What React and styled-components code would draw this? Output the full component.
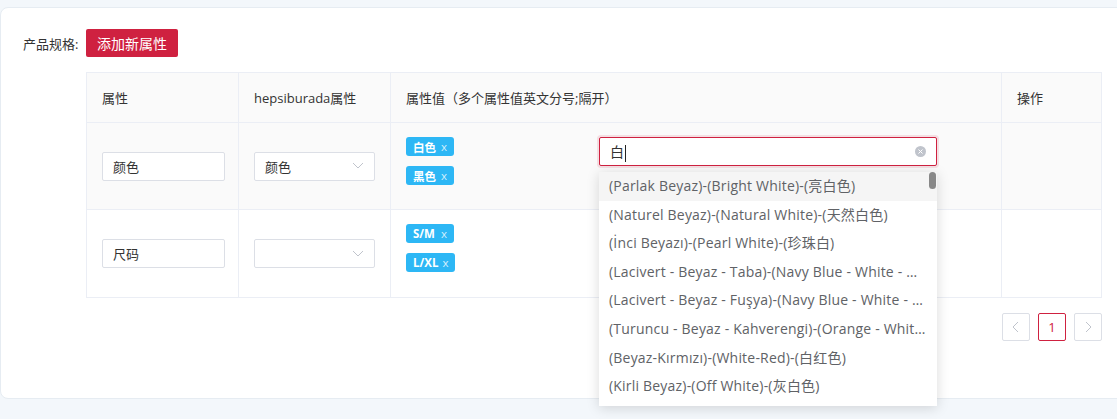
import React from 'react';
import styled, { createGlobalStyle } from 'styled-components';

const GlobalStyle = createGlobalStyle`
    html, body {
        margin: 0;
        padding: 0;
        background: #f3f7fb;
        overflow: hidden;
    }
    body {
        font-family: "Open Sans", "Noto Sans CJK SC", sans-serif;
        color: #333;
    }
`;

const RED = '#cf2140';

const Page = styled.div`
    padding-top: 7px;
    width: 1117px;
    height: 419px;
    box-sizing: border-box;
`;

const Card = styled.div`
    position: relative;
    height: 392px;
    margin-right: -12px;
    box-sizing: border-box;
    padding: 21px 0 0 22px;
    background: #fff;
    border: 1px solid #e6ecf2;
    border-radius: 8px 0 0 8px;
`;

const SpecRow = styled.div`
    display: flex;
    align-items: center;
    gap: 6px;
`;

const Label = styled.span`
    width: 57px;
    font-size: 13px;
    color: #333;
    white-space: nowrap;
`;

const AddButton = styled.button`
    width: 92px;
    height: 28px;
    border: none;
    border-radius: 2px;
    background: ${RED};
    color: #fff;
    font-family: inherit;
    font-size: 14px;
    padding: 0;
    cursor: pointer;
`;

const Body = styled.div`
    margin: 15px 0 0 63px;
    width: 1016px;
`;

const Table = styled.table`
    width: 1015px;
    border-collapse: collapse;
    table-layout: fixed;
`;

const Th = styled.th`
    height: 49px;
    padding: 0 0 0 15px;
    text-align: left;
    font-weight: 400;
    font-size: 13px;
    color: #333;
    background: #fafafa;
    border: 1px solid #ebeef5;
`;

const Tr = styled.tr`
    background: ${p => (p.$hover ? '#fafafa' : '#fff')};
`;

const Td = styled.td`
    height: ${p => p.$h}px;
    padding: 0 0 0 15px;
    border: 1px solid #ebeef5;
    vertical-align: ${p => (p.$top ? 'top' : 'middle')};
    box-sizing: border-box;
`;

const TextInput = styled.input`
    display: block;
    width: 123px;
    height: 29px;
    box-sizing: border-box;
    padding: 0 10px;
    border: 1px solid #dcdfe6;
    border-radius: 2px;
    font-family: inherit;
    font-size: 13px;
    color: #333;
    background: #fff;
    outline: none;
`;

const Select = styled.div`
    width: 121px;
    height: 29px;
    box-sizing: border-box;
    padding: 0 10px;
    display: flex;
    align-items: center;
    justify-content: space-between;
    border: 1px solid #dcdfe6;
    border-radius: 2px;
    background: #fff;
    font-size: 13px;
    color: #333;
`;

const ValueCell = styled.div`
    display: flex;
    align-items: flex-start;
    padding-top: 14px;
`;

const TagList = styled.div`
    width: 193px;
    display: flex;
    flex-direction: column;
    align-items: flex-start;
    gap: 10px;
`;

const Tag = styled.span`
    min-width: 48px;
    height: 19px;
    box-sizing: border-box;
    padding: 0 7px;
    display: inline-flex;
    align-items: center;
    justify-content: space-between;
    gap: 4px;
    border-radius: 3px;
    background: #2db7f5;
    color: #fff;
    font-size: 11.5px;
    font-weight: 700;

    i {
        font-style: normal;
        font-weight: 400;
        color: rgba(255, 255, 255, 0.8);
    }
`;

const SearchBox = styled.div`
    position: relative;
    width: 338px;
`;

const SearchInput = styled.div`
    height: 29px;
    box-sizing: border-box;
    padding: 0 10px;
    display: flex;
    align-items: center;
    justify-content: space-between;
    border: 1px solid ${RED};
    border-radius: 2px;
    box-shadow: 0 0 0 2px rgba(207, 33, 64, 0.12);
    background: #fff;
    font-size: 14px;
    color: #333;
`;

const Caret = styled.span`
    display: inline-block;
    width: 1px;
    height: 17px;
    margin-left: 1px;
    background: #222;
    vertical-align: middle;
`;

const ClearIcon = styled.span`
    width: 11px;
    height: 11px;
    border-radius: 50%;
    background: #c0c4cc;
    display: flex;
    align-items: center;
    justify-content: center;
`;

const Dropdown = styled.ul`
    position: absolute;
    top: 35px;
    left: 0;
    z-index: 10;
    width: 338px;
    height: 234px;
    margin: 0;
    padding: 0;
    list-style: none;
    overflow: hidden;
    background: #fff;
    box-shadow: 0 2px 12px rgba(0, 0, 0, 0.15);
`;

const Option = styled.li`
    height: 28.6px;
    line-height: 28.6px;
    padding: 0 10px;
    white-space: nowrap;
    font-size: 14px;
    letter-spacing: 0.2px;
    color: #606266;
    background: ${p => (p.$active ? '#f5f5f5' : 'transparent')};
`;

const Scrollbar = styled.span`
    position: absolute;
    top: 0;
    right: 1px;
    width: 7px;
    height: 17px;
    border-radius: 4px;
    background: #888;
`;

const Pager = styled.div`
    display: flex;
    justify-content: flex-end;
    gap: 8px;
    margin-top: 15px;
`;

const PageBtn = styled.span`
    width: 28px;
    height: 28px;
    box-sizing: border-box;
    display: flex;
    align-items: center;
    justify-content: center;
    border: 1px solid ${p => (p.$active ? RED : '#dcdfe6')};
    border-radius: 2px;
    color: ${p => (p.$active ? RED : '#c0c4cc')};
    font-size: 13px;
    background: #fff;
`;

const Chevron = ({ dir = 'down' }) => {
    const d = {
        down: 'M1 3l5 5 5-5',
        left: 'M8 1L3 6l5 5',
        right: 'M4 1l5 5-5 5',
    }[dir];
    return (
        <svg width="12" height="12" viewBox="0 0 12 12" fill="none">
            <path d={d} stroke="#c0c4cc" strokeWidth="1" />
        </svg>
    );
};

const options = [
    '(Parlak Beyaz)-(Bright White)-(亮白色)',
    '(Naturel Beyaz)-(Natural White)-(天然白色)',
    '(İnci Beyazı)-(Pearl White)-(珍珠白)',
    '(Lacivert - Beyaz - Taba)-(Navy Blue - White - …',
    '(Lacivert - Beyaz - Fuşya)-(Navy Blue - White - …',
    '(Turuncu - Beyaz - Kahverengi)-(Orange - Whit…',
    '(Beyaz-Kırmızı)-(White-Red)-(白红色)',
    '(Kirli Beyaz)-(Off White)-(灰白色)',
];

export default function App() {
    return (
        <Page>
            <GlobalStyle />
            <Card>
                <SpecRow>
                    <Label>产品规格:</Label>
                    <AddButton>添加新属性</AddButton>
                </SpecRow>
                <Body>
                    <Table>
                        <colgroup>
                            <col style={{ width: 152 }} />
                            <col style={{ width: 152 }} />
                            <col style={{ width: 611 }} />
                            <col style={{ width: 100 }} />
                        </colgroup>
                        <thead>
                            <tr>
                                <Th>属性</Th>
                                <Th>hepsiburada属性</Th>
                                <Th>属性值（多个属性值英文分号;隔开）</Th>
                                <Th>操作</Th>
                            </tr>
                        </thead>
                        <tbody>
                            <Tr $hover>
                                <Td $h={87}>
                                    <TextInput defaultValue="颜色" />
                                </Td>
                                <Td $h={87}>
                                    <Select>
                                        <span>颜色</span>
                                        <Chevron />
                                    </Select>
                                </Td>
                                <Td $h={87} $top>
                                    <ValueCell>
                                        <TagList>
                                            <Tag>白色 <i>x</i></Tag>
                                            <Tag>黑色 <i>x</i></Tag>
                                        </TagList>
                                        <SearchBox>
                                            <SearchInput>
                                                <span>白<Caret /></span>
                                                <ClearIcon>
                                                    <svg width="5" height="5" viewBox="0 0 5 5">
                                                        <path d="M0.5 0.5l4 4M4.5 0.5l-4 4" stroke="#fff" strokeWidth="1" />
                                                    </svg>
                                                </ClearIcon>
                                            </SearchInput>
                                            <Dropdown>
                                                {options.map((o, i) => (
                                                    <Option key={o} $active={i === 0}>{o}</Option>
                                                ))}
                                                <Scrollbar />
                                            </Dropdown>
                                        </SearchBox>
                                    </ValueCell>
                                </Td>
                                <Td $h={87} />
                            </Tr>
                            <Tr>
                                <Td $h={88}>
                                    <TextInput defaultValue="尺码" />
                                </Td>
                                <Td $h={88}>
                                    <Select>
                                        <span />
                                        <Chevron />
                                    </Select>
                                </Td>
                                <Td $h={88} $top>
                                    <ValueCell>
                                        <TagList>
                                            <Tag>S/M <i>x</i></Tag>
                                            <Tag>L/XL <i>x</i></Tag>
                                        </TagList>
                                    </ValueCell>
                                </Td>
                                <Td $h={88} />
                            </Tr>
                        </tbody>
                    </Table>
                    <Pager>
                        <PageBtn><Chevron dir="left" /></PageBtn>
                        <PageBtn $active>1</PageBtn>
                        <PageBtn><Chevron dir="right" /></PageBtn>
                    </Pager>
                </Body>
            </Card>
        </Page>
    );
}
